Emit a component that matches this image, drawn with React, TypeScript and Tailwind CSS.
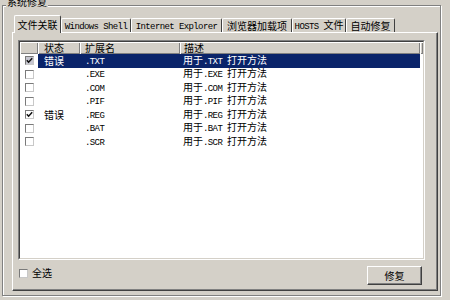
import React from "react";

const mono = "font-['Liberation_Mono',monospace] text-[9px] tracking-[-0.6px]";

function Lat({ children }: { children: React.ReactNode }) {
  return <span className={mono}>{children}</span>;
}

function Check({ checked, tint = false }: { checked?: boolean; tint?: boolean }) {
  return (
    <span
      className={`flex w-[9px] h-[9px] items-center justify-center border border-t-[#7a7a7a] border-l-[#7a7a7a] border-r-[#c8c8c8] border-b-[#c8c8c8] ${
        tint ? "bg-[#c6c6d0]" : "bg-white"
      }`}
    >
      {checked && (
        <svg width="7" height="7" viewBox="0 0 7 7">
          <path d="M0.8 3.2 L2.6 5.2 L6.2 1.2" fill="none" stroke="#111" strokeWidth="1.5" />
        </svg>
      )}
    </span>
  );
}

const tabs = [
  { label: <>文件关联</>, cls: "w-[47px]" },
  { label: <Lat>Windows Shell</Lat>, cls: "w-[70px]" },
  { label: <Lat>Internet Explorer</Lat>, cls: "w-[91px]" },
  { label: <>浏览器加载项</>, cls: "w-[70px]" },
  { label: <><Lat>HOSTS&nbsp;</Lat>文件</>, cls: "w-[54px]" },
  { label: <>自动修复</>, cls: "w-[49px]" },
];

const rows = [
  { ext: ".TXT", status: "错误", checked: true, selected: true },
  { ext: ".EXE" },
  { ext: ".COM" },
  { ext: ".PIF" },
  { ext: ".REG", status: "错误", checked: true },
  { ext: ".BAT" },
  { ext: ".SCR" },
];

const headCell =
  "h-full flex items-center bg-[#d4d0c8] shadow-[inset_1px_1px_0_#fff,inset_-1px_-1px_0_#808080]";

export default function App() {
  return (
    <div className="w-[450px] h-[300px] overflow-hidden bg-[#d4d0c8] pt-[5px] pl-[2px] font-['Noto_Sans_CJK_SC',sans-serif] text-[10px] leading-none text-black">
      <div className="relative w-[439px] h-[291px] flex flex-col border border-[#808080] shadow-[inset_1px_1px_0_#fff,1px_1px_0_#fff] pt-[9px] pl-[9px] pr-[2px] pb-[4px]">
        <span className="absolute left-[3px] top-[-9px] px-[1px] bg-[#d4d0c8]">系统修复</span>

        <div className="h-[17px] flex items-end">
          {tabs.map((t, i) =>
            i === 0 ? (
              <div
                key={i}
                className={`${t.cls} ml-[2px] h-[18px] -mb-[1px] relative z-10 flex items-center justify-center bg-[#d4d0c8] border-t border-l border-white border-r border-r-[#404040] rounded-t-[2px]`}
              >
                <span>{t.label}</span>
              </div>
            ) : (
              <div
                key={i}
                className={`${t.cls} h-[14px] flex items-center justify-center bg-[#d4d0c8] border-t border-l border-white border-r border-r-[#404040] rounded-t-[2px]`}
              >
                <span>{t.label}</span>
              </div>
            )
          )}
        </div>

        <div className="flex-1 flex flex-col border border-white border-r-[#404040] border-b-[#404040] shadow-[inset_-1px_-1px_0_#808080] pt-[7px] pl-[5px]">
          <div className="w-[407px] h-[220px] border border-[#808080] border-r-white border-b-white">
            <div className="h-full flex flex-col bg-white border border-[#404040] border-r-[#d4d0c8] border-b-[#d4d0c8]">
              <div className="h-[12px] flex">
                <div className={`${headCell} w-[18px]`} />
                <div className={`${headCell} w-[42px] pl-[6px]`}>状态</div>
                <div className={`${headCell} w-[100px] pl-[5px]`}>扩展名</div>
                <div className={`${headCell} w-[240px] pl-[4px]`}>描述</div>
                <div className={`${headCell} flex-1`} />
              </div>
              {rows.map((r) => (
                <div key={r.ext} className="h-[13.5px] flex items-center">
                  <div className="w-[18px] h-full flex items-center pl-[5px]">
                    <Check checked={r.checked} tint={r.selected} />
                  </div>
                  <div
                    className={`w-[382px] h-full flex items-center ${
                      r.selected ? "bg-[#0a246a] text-white" : ""
                    }`}
                  >
                    <div className="w-[42px] pl-[6px]">{r.status}</div>
                    <div className="w-[100px] pl-[5px]">
                      <Lat>{r.ext}</Lat>
                    </div>
                    <div className="flex-1 pl-[3px]">
                      用于<Lat>{r.ext} </Lat>打开方法
                    </div>
                  </div>
                </div>
              ))}
            </div>
          </div>

          <div className="w-[407px] h-[19px] mt-[6px] flex justify-between">
            <div className="flex items-center gap-[4px] ml-[1px] mt-[2px] self-start">
              <Check />
              <span>全选</span>
            </div>
            <button className="w-[55px] h-[19px] mr-[3px] flex items-center justify-center bg-[#d4d0c8] border border-white border-r-[#404040] border-b-[#404040] shadow-[inset_-1px_-1px_0_#808080]">
              修复
            </button>
          </div>
        </div>
      </div>
    </div>
  );
}
